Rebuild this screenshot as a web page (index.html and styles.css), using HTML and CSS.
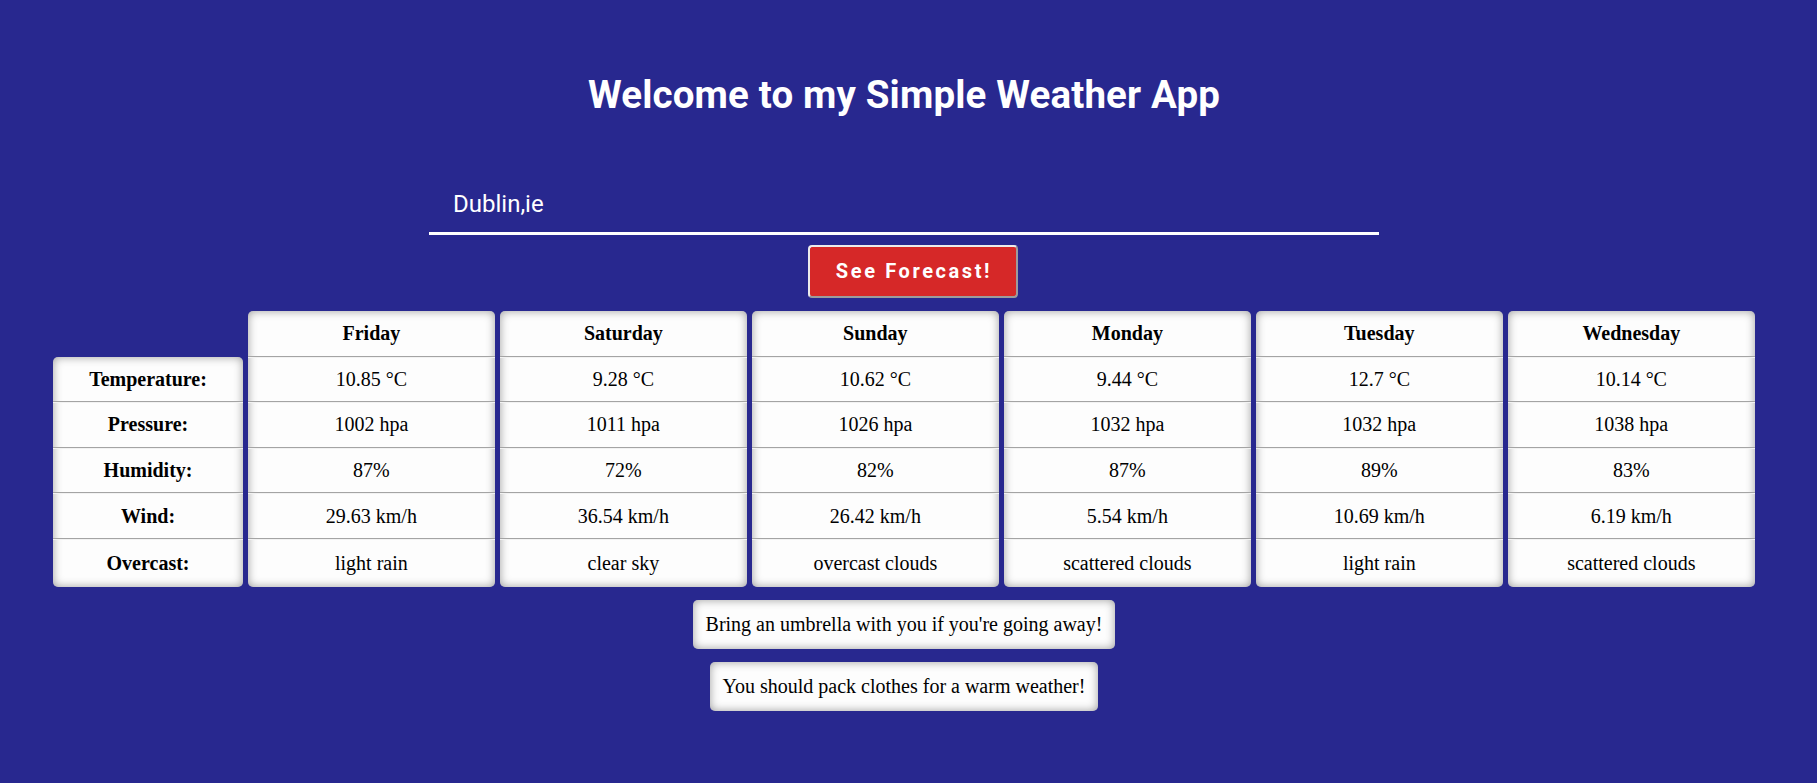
FILE: index.html
```html
<!DOCTYPE html>
<html lang="en">
<head>
<meta charset="utf-8">
<title>Simple Weather App</title>
<link rel="stylesheet" href="styles.css">
</head>
<body>
<main class="app">
  <h1 class="title">Welcome to my Simple Weather App</h1>
  <form class="search">
    <input class="city-input" type="text" value="Dublin,ie">
    <button class="forecast-btn" type="button">See Forecast!</button>
  </form>

  <section class="forecast">
    <table class="card labels">
      <tbody>
        <tr><th>Temperature:</th></tr>
        <tr><th>Pressure:</th></tr>
        <tr><th>Humidity:</th></tr>
        <tr><th>Wind:</th></tr>
        <tr><th>Overcast:</th></tr>
      </tbody>
    </table>
    <table class="card day">
      <thead><tr><th>Friday</th></tr></thead>
      <tbody>
        <tr><td>10.85 &deg;C</td></tr>
        <tr><td>1002 hpa</td></tr>
        <tr><td>87%</td></tr>
        <tr><td>29.63 km/h</td></tr>
        <tr><td>light rain</td></tr>
      </tbody>
    </table>
    <table class="card day">
      <thead><tr><th>Saturday</th></tr></thead>
      <tbody>
        <tr><td>9.28 &deg;C</td></tr>
        <tr><td>1011 hpa</td></tr>
        <tr><td>72%</td></tr>
        <tr><td>36.54 km/h</td></tr>
        <tr><td>clear sky</td></tr>
      </tbody>
    </table>
    <table class="card day">
      <thead><tr><th>Sunday</th></tr></thead>
      <tbody>
        <tr><td>10.62 &deg;C</td></tr>
        <tr><td>1026 hpa</td></tr>
        <tr><td>82%</td></tr>
        <tr><td>26.42 km/h</td></tr>
        <tr><td>overcast clouds</td></tr>
      </tbody>
    </table>
    <table class="card day">
      <thead><tr><th>Monday</th></tr></thead>
      <tbody>
        <tr><td>9.44 &deg;C</td></tr>
        <tr><td>1032 hpa</td></tr>
        <tr><td>87%</td></tr>
        <tr><td>5.54 km/h</td></tr>
        <tr><td>scattered clouds</td></tr>
      </tbody>
    </table>
    <table class="card day">
      <thead><tr><th>Tuesday</th></tr></thead>
      <tbody>
        <tr><td>12.7 &deg;C</td></tr>
        <tr><td>1032 hpa</td></tr>
        <tr><td>89%</td></tr>
        <tr><td>10.69 km/h</td></tr>
        <tr><td>light rain</td></tr>
      </tbody>
    </table>
    <table class="card day">
      <thead><tr><th>Wednesday</th></tr></thead>
      <tbody>
        <tr><td>10.14 &deg;C</td></tr>
        <tr><td>1038 hpa</td></tr>
        <tr><td>83%</td></tr>
        <tr><td>6.19 km/h</td></tr>
        <tr><td>scattered clouds</td></tr>
      </tbody>
    </table>
  </section>

  <section class="advice">
    <p class="note">Bring an umbrella with you if you're going away!</p>
    <p class="note">You should pack clothes for a warm weather!</p>
  </section>
</main>
</body>
</html>
```

FILE: styles.css
```css
html, body {
  background: #28288f;
}

body {
  margin: 0;
  padding: 0 17px 0 8px;
  font-family: "Liberation Serif", "Times New Roman", serif;
  color: #000;
}

.app {
  display: flex;
  flex-direction: column;
  align-items: center;
}

.title {
  margin: 72px 0 0;
  font-family: Roboto, "Liberation Sans", Arial, sans-serif;
  font-weight: 700;
  font-size: 38.5px;
  line-height: 46px;
  letter-spacing: 0.15px;
  color: #fff;
}

.search {
  display: flex;
  flex-direction: column;
  align-items: center;
  margin-top: 60px;
}

.city-input {
  box-sizing: border-box;
  width: 950px;
  margin: 0;
  padding: 12px 24px 14px;
  border: none;
  border-bottom: 3px solid #fff;
  background: transparent;
  color: #fff;
  font-family: Roboto, "Liberation Sans", Arial, sans-serif;
  font-size: 24px;
  line-height: 28px;
  outline: none;
}

.forecast-btn {
  box-sizing: border-box;
  width: 210px;
  margin: 10px 0 0 18px;
  padding: 13px 0;
  border: 2px solid;
  border-color: #ececec #9c9c9c #9c9c9c #ececec;
  border-radius: 4px;
  background: #d62828;
  color: #fff;
  font-family: Roboto, "Liberation Sans", Arial, sans-serif;
  font-weight: 700;
  font-size: 20px;
  line-height: 23px;
  letter-spacing: 2.6px;
  text-indent: 2px;
}

.forecast {
  display: flex;
  align-items: flex-end;
  gap: 5.3px;
  margin-top: 13px;
}

.card {
  border-collapse: separate;
  border-spacing: 0;
  background: #fdfdfd;
  border-radius: 5px;
  box-shadow: inset 0 0 10px rgba(0, 0, 0, 0.38);
  font-size: 20px;
  text-align: center;
}

.labels {
  width: 189.4px;
}

.day {
  width: 246.7px;
}

.card th,
.card td {
  box-sizing: border-box;
  height: 45.6px;
  padding: 0 4px;
  line-height: 22px;
  border-bottom: 1px solid #a4a4a4;
  white-space: nowrap;
}

.card tbody tr + tr th,
.card tbody tr + tr td,
.day tbody tr:first-child td {
  box-shadow: inset 0 1px 0 #f2f2f2;
}

.card th {
  font-weight: 700;
}

.card td {
  font-weight: 400;
}

.card tbody tr:last-child th,
.card tbody tr:last-child td {
  height: 48px;
  border-bottom: none;
}

.advice {
  display: flex;
  flex-direction: column;
  align-items: center;
  gap: 13px;
  margin-top: 13px;
}

.note {
  margin: 0;
  padding: 13.5px 13px;
  background: #fdfdfd;
  border-radius: 5px;
  box-shadow: inset 0 0 10px rgba(0, 0, 0, 0.38);
  font-size: 20px;
  line-height: 22px;
}
```
